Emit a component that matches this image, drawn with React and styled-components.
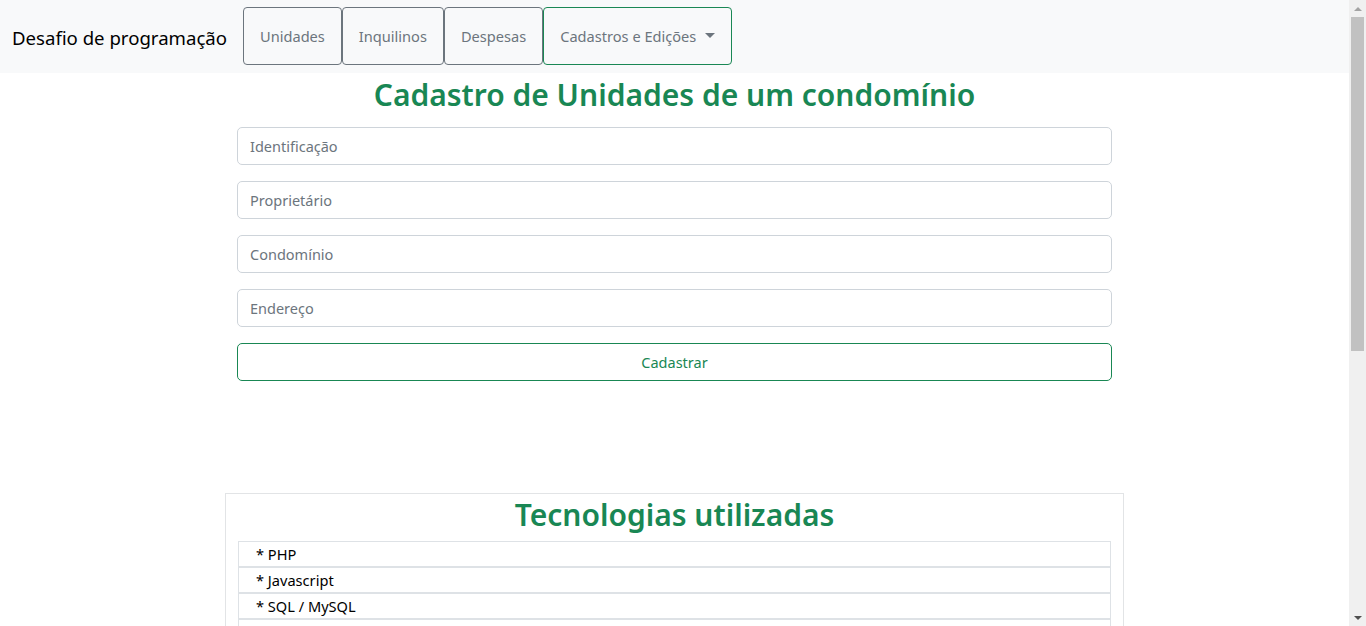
import React from "react";
import styled, { createGlobalStyle } from "styled-components";

const Global = createGlobalStyle`
  html, body { height: 100%; }
  body {
    margin: 0;
    overflow: hidden;
    font-family: "Noto Sans", "Open Sans", sans-serif;
    color: #212529;
    background: #fff;
  }
  * { box-sizing: border-box; }
`;

const Frame = styled.div`
  display: flex;
  height: 626px;
  overflow: hidden;
`;

const Page = styled.div`
  flex: 1;
  min-width: 0;
  overflow: hidden;
`;

const ScrollBar = styled.div`
  width: 17px;
  flex: none;
  background: #f0f0f0;
  display: flex;
  flex-direction: column;
  align-items: center;
`;

const Arrow = styled.div`
  height: 17px;
  width: 100%;
  display: flex;
  align-items: center;
  justify-content: center;
  &::before {
    content: "";
    width: 0;
    height: 0;
    border-left: 4px solid transparent;
    border-right: 4px solid transparent;
    ${(p) =>
      p.$down
        ? "border-top: 4px solid #505050;"
        : "border-bottom: 4px solid #a3a3a3;"}
  }
`;

const Track = styled.div`
  flex: 1;
  width: 100%;
  padding: 0 2px;
`;

const Thumb = styled.div`
  height: 334px;
  background: #c1c1c1;
`;

const Navbar = styled.nav`
  background: #f8f9fa;
  height: 73px;
  display: flex;
  align-items: flex-start;
  padding: 0 12px;
`;

const Brand = styled.span`
  font-size: 18.6px;
  color: #000;
  margin-right: 16px;
  margin-top: 25px;
`;

const NavGroup = styled.div`
  display: flex;
  margin-top: 7px;
`;

const NavButton = styled.button`
  height: 58px;
  padding: 0 16px;
  border: 1px solid ${(p) => (p.$green ? "#198754" : "#6c757d")};
  border-radius: 4px;
  background: transparent;
  color: #6c757d;
  font-family: inherit;
  font-size: 14.6px;
  display: flex;
  align-items: center;
  gap: 9px;
  cursor: pointer;
`;

const Caret = styled.span`
  width: 0;
  height: 0;
  border-left: 5px solid transparent;
  border-right: 5px solid transparent;
  border-top: 5px solid #6c757d;
  margin-top: -2px;
`;

const Main = styled.main`
  display: flex;
  flex-direction: column;
  align-items: center;
`;

const Title = styled.h2`
  margin: ${(p) => (p.$inCard ? "2px 0 0" : "3px 0 13px")};
  font-size: 30px;
  line-height: 38px;
  font-weight: 600;
  color: #198754;
  text-align: center;
`;

const Form = styled.form`
  width: 875px;
  display: flex;
  flex-direction: column;
  gap: 16px;
`;

const Input = styled.input`
  height: 38px;
  width: 100%;
  border: 1px solid #ced4da;
  border-radius: 5px;
  padding: 0 12px;
  font-family: inherit;
  font-size: 14.5px;
  color: #212529;
  &::placeholder { color: #6c757d; }
`;

const Submit = styled.button`
  height: 38px;
  width: 100%;
  border: 1px solid #198754;
  border-radius: 5px;
  background: #fff;
  color: #198754;
  font-family: inherit;
  font-size: 14.5px;
`;

const Card = styled.section`
  margin-top: 112px;
  width: 899px;
  border: 1px solid #e2e4e6;
  padding: 0 12px 40px;
`;

const List = styled.ul`
  list-style: none;
  margin: 7px 0 0;
  padding: 0;
`;

const Item = styled.li`
  border: 1px solid #dee2e6;
  height: 26px;
  line-height: 24px;
  padding-left: 17px;
  font-size: 14.6px;
  color: #000;
`;

const techs = ["PHP", "Javascript", "SQL / MySQL", "HTML / CSS"];

export default function App() {
  return (
    <>
      <Global />
      <Frame>
        <Page>
          <Navbar>
            <Brand>Desafio de programação</Brand>
            <NavGroup>
              <NavButton>Unidades</NavButton>
              <NavButton>Inquilinos</NavButton>
              <NavButton>Despesas</NavButton>
              <NavButton $green>
                Cadastros e Edições <Caret />
              </NavButton>
            </NavGroup>
          </Navbar>
          <Main>
            <Title>Cadastro de Unidades de um condomínio</Title>
            <Form onSubmit={(e) => e.preventDefault()}>
              <Input placeholder="Identificação" />
              <Input placeholder="Proprietário" />
              <Input placeholder="Condomínio" />
              <Input placeholder="Endereço" />
              <Submit type="submit">Cadastrar</Submit>
            </Form>
            <Card>
              <Title $inCard>Tecnologias utilizadas</Title>
              <List>
                {techs.map((t) => (
                  <Item key={t}>* {t}</Item>
                ))}
              </List>
            </Card>
          </Main>
        </Page>
        <ScrollBar>
          <Arrow />
          <Track>
            <Thumb />
          </Track>
          <Arrow $down />
        </ScrollBar>
      </Frame>
    </>
  );
}
